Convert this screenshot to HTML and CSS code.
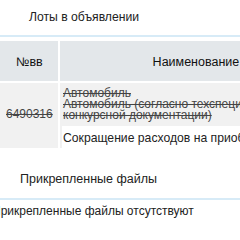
FILE: index.html
```html
<!DOCTYPE html>
<html>
<head>
<meta charset="utf-8">
<link rel="stylesheet" href="styles.css">
</head>
<body>
<div class="page">
  <div class="section-title">Лоты в объявлении</div>
  <div class="rule"></div>
  <div class="lots">
    <div class="head num">№вв</div>
    <div class="head name">Наименование лота</div>
    <div class="cell num-cell"><s>6490316</s></div>
    <div class="cell name-cell">
      <div class="old">
        <s>Автомобиль</s><br>
        <s>Автомобиль (согласно техспецификации</s><br>
        <s>конкурсной документации)</s>
      </div>
      <div class="new">Сокращение расходов на приобретение</div>
    </div>
  </div>
  <div class="section-title files">Прикрепленные файлы</div>
  <div class="rule"></div>
  <div class="empty">Прикрепленные файлы отсутствуют</div>
</div>
</body>
</html>
```
FILE: styles.css
```css
html, body {
  margin: 0;
  padding: 0;
  background: #fff;
  overflow: hidden;
}
.page {
  width: 240px;
  font-family: "Liberation Sans", Arial, sans-serif;
  color: #222;
}
.section-title {
  font-size: 12.2px;
  height: 35px;
  line-height: 35px;
  padding-left: 29px;
  white-space: nowrap;
}
.rule {
  height: 2px;
  background: #d7ebf7;
}
.lots {
  margin-top: 4px;
  width: 362px;
  display: grid;
  grid-template-columns: 58px 302px;
  column-gap: 2px;
  row-gap: 2px;
}
.head {
  background: #e3e7ea;
  height: 40px;
  line-height: 42px;
  font-size: 12.5px;
  color: #111;
  white-space: nowrap;
}
.head.num {
  padding-left: 16px;
}
.head.name {
  text-align: center;
}
.cell {
  font-size: 12px;
}
.num-cell {
  background: #f1f1f1;
  color: #444;
  padding-left: 6px;
  padding-top: 24px;
  height: 41px;
}
.name-cell {
  background: #f1f1f1;
  display: flex;
  flex-direction: column;
}
.old {
  color: #444;
  padding: 5px 0 0 3px;
  line-height: 11px;
  height: 38px;
  white-space: nowrap;
}
.new {
  background: #fff;
  margin-left: 2px;
  font-size: 12.2px;
  height: 22px;
  line-height: 24px;
  padding-left: 1px;
  white-space: nowrap;
  color: #222;
}
.section-title.files {
  font-size: 12.5px;
  margin-top: 15px;
  padding-left: 20px;
  height: 35px;
  line-height: 32px;
}
.empty {
  font-size: 12px;
  margin-left: -8px;
  padding-top: 4px;
  white-space: nowrap;
}
```
